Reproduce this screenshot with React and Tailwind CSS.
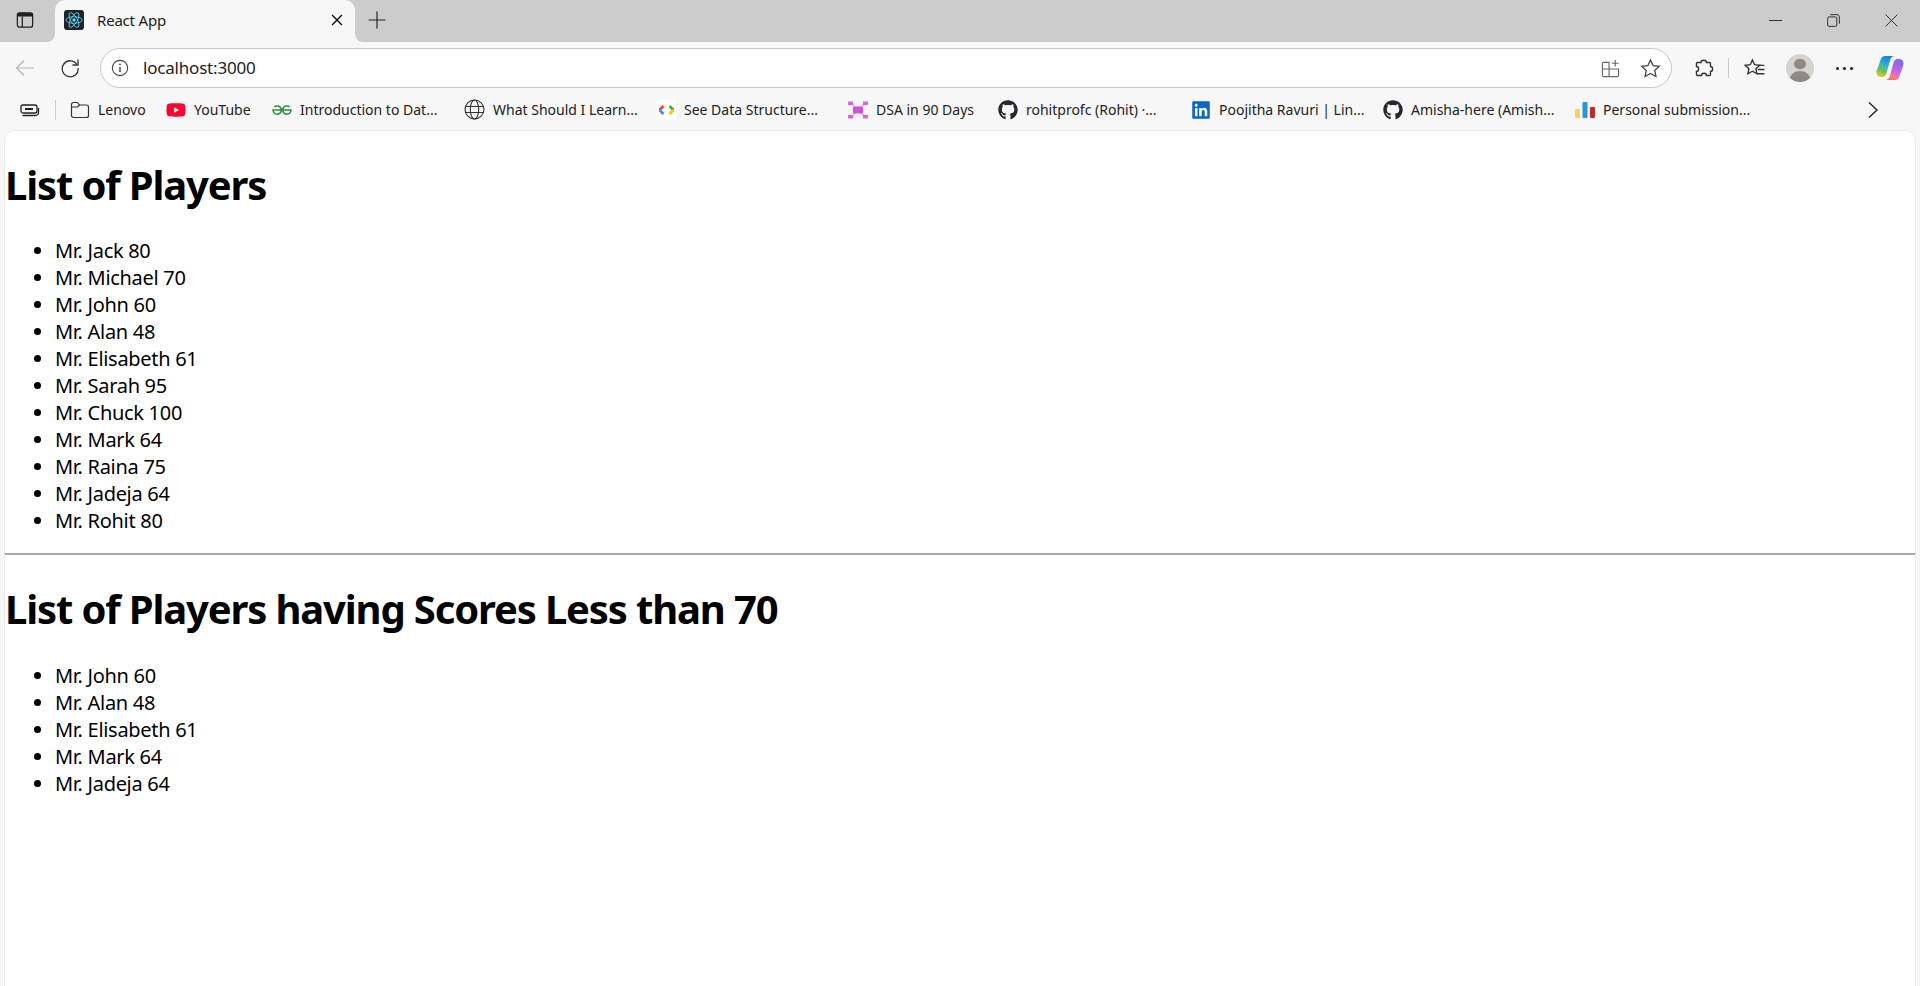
import { FaGithub, FaYoutube, FaLinkedin } from "react-icons/fa";

const chromeFont = "[font-family:'Noto_Sans',sans-serif]";

const players = [
  ["Jack", 80], ["Michael", 70], ["John", 60], ["Alan", 48], ["Elisabeth", 61], ["Sarah", 95],
  ["Chuck", 100], ["Mark", 64], ["Raina", 75], ["Jadeja", 64], ["Rohit", 80],
];

// Small stroke icon wrapper
const Icon = ({ size = 20, className = "", children }) => (
  <svg width={size} height={size} viewBox="0 0 20 20" fill="none" stroke="currentColor" strokeWidth="1.2" className={`shrink-0 ${className}`}>
    {children}
  </svg>
);

const ReactLogo = () => (
  <div className="w-5 h-5 rounded-[3px] bg-[#20232a] flex items-center justify-center shrink-0">
    <svg width="18" height="18" viewBox="-11 -11 22 22" fill="none" stroke="#61dafb" strokeWidth="1">
      <circle r="2" fill="#61dafb" stroke="none" />
      <ellipse rx="10" ry="4" />
      <ellipse rx="10" ry="4" transform="rotate(60)" />
      <ellipse rx="10" ry="4" transform="rotate(120)" />
    </svg>
  </div>
);

const Copilot = () => (
  <svg width="28" height="28" viewBox="0 0 28 28" className="shrink-0">
    <defs>
      <linearGradient id="cpa" x1="0.6" y1="0" x2="0.2" y2="1">
        <stop offset="0" stopColor="#1b7fe8" />
        <stop offset="0.45" stopColor="#2cb8c8" />
        <stop offset="0.7" stopColor="#6cc24a" />
        <stop offset="1" stopColor="#f6c52d" />
      </linearGradient>
      <linearGradient id="cpb" x1="0.6" y1="0" x2="0.4" y2="1">
        <stop offset="0" stopColor="#7b6cf0" />
        <stop offset="0.5" stopColor="#c263e0" />
        <stop offset="0.85" stopColor="#f47a9a" />
        <stop offset="1" stopColor="#f5763a" />
      </linearGradient>
    </defs>
    <path d="M9 2h10c-2.500 0-4 1.500-4.800 4L10.500 19c-.8 2.500-2 4-4.500 4H5C2 23 .5 21 .5 18.500c0-1 .3-2 .6-3L4.500 6C5.300 3.500 6.800 2 9 2z" fill="url(#cpa)" />
    <path d="M19 26H9c2.500 0 4-1.500 4.800-4L17.500 9c.8-2.500 2-4 4.500-4h1c3 0 4.500 2 4.500 4.500 0 1-.3 2-.6 3L23.500 22c-.8 2.500-2.300 4-4.500 4z" fill="url(#cpb)" />
  </svg>
);

const Folder = () => (
  <Icon className="text-[#333]">
    <path d="M1.500 4.500a2 2 0 0 1 2-2h4l2 2.500h7a2 2 0 0 1 2 2v8.500a2 2 0 0 1-2 2h-13a2 2 0 0 1-2-2z" />
    <path d="M1.500 7h6l2-2" />
  </Icon>
);

const Globe = () => (
  <svg width="21" height="21" viewBox="0 0 21 21" fill="none" stroke="#333" strokeWidth="1.100" className="shrink-0">
    <circle cx="10.500" cy="10.500" r="9.500" />
    <ellipse cx="10.500" cy="10.500" rx="4.200" ry="9.500" />
    <path d="M1.500 7.500h18M1.500 13.500h18" />
  </svg>
);

const Gfg = () => (
  <svg width="20" height="20" viewBox="0 0 20 20" fill="none" stroke="#2f8d46" strokeWidth="1.500" className="shrink-0">
    <path d="M2.500 7C3.500 5.500 8.500 5 9.500 10H1C1.500 15.500 8.500 15.500 9.500 10" />
    <path d="M17.500 7C16.500 5.500 11.500 5 10.500 10H19C18.500 15.500 11.500 15.500 10.500 10" />
  </svg>
);

const CodeMark = () => (
  <div className="w-5 h-5 bg-white flex items-center justify-center shrink-0">
    <svg width="17" height="10" viewBox="0 0 17 10" fill="none" strokeWidth="2.500">
      <path d="M5.500 1 1.500 5" stroke="#ea4335" />
      <path d="M1.500 5l4 4" stroke="#4285f4" />
      <path d="M11.500 1l4 4" stroke="#34a853" />
      <path d="M15.500 5l-4 4" stroke="#fbbc05" />
    </svg>
  </div>
);

const DsaMark = () => (
  <svg width="20" height="20" viewBox="0 0 20 20" className="shrink-0" fill="#d34fdc">
    <path d="M3 3l14 14M17 3 3 17" stroke="#d34fdc" strokeWidth="1.500" opacity="0.5" />
    <rect x="5" y="6.500" width="10" height="7" rx="1.500" />
    <rect x="0" y="1.500" width="5" height="3.500" opacity="0.85" />
    <rect x="15" y="1.500" width="5" height="3.500" opacity="0.85" />
    <rect x="0" y="15" width="5" height="3.500" opacity="0.85" />
    <rect x="15" y="15" width="5" height="3.500" opacity="0.85" />
  </svg>
);

const BarsMark = () => (
  <svg width="20" height="20" viewBox="0 0 20 20" className="shrink-0">
    <rect x="0" y="9" width="5" height="9" rx="1" fill="#fbcf5b" />
    <rect x="7.500" y="2" width="5" height="16" rx="1" fill="#2b93d8" />
    <rect x="15" y="7" width="5" height="11" rx="1" fill="#c4262e" />
  </svg>
);

const bookmarks = [
  { label: "Lenovo", width: "w-[96px]", icon: <Folder /> },
  { label: "YouTube", width: "w-[106px]", icon: <FaYoutube size={20} className="text-[#ff0033] shrink-0" /> },
  { label: "Introduction to Dat...", width: "w-[192px]", icon: <Gfg /> },
  { label: "What Should I Learn...", width: "w-[192px]", icon: <Globe /> },
  { label: "See Data Structure...", width: "w-[192px]", icon: <CodeMark /> },
  { label: "DSA in 90 Days", width: "w-[150px]", icon: <DsaMark /> },
  { label: "rohitprofc (Rohit) ·...", width: "w-[193px]", icon: <FaGithub size={20} className="text-[#24292f] shrink-0" /> },
  { label: "Poojitha Ravuri | Lin...", width: "w-[192px]", icon: <FaLinkedin size={20} className="text-[#0a66c2] shrink-0" /> },
  { label: "Amisha-here (Amish...", width: "w-[192px]", icon: <FaGithub size={20} className="text-[#24292f] shrink-0" /> },
  { label: "Personal submission...", width: "w-[280px]", icon: <BarsMark /> },
];

const PlayerList = ({ items }) => (
  <ul className="list-disc pl-[50px]">
    {items.map(([name, score]) => (
      <li key={name} className="leading-[27px] tracking-[-0.3px]">Mr. {name} {score}</li>
    ))}
  </ul>
);

export default function App() {
  return (
    <div className={`h-[986px] overflow-hidden bg-[#f7f7f7] text-[#1b1b1b] ${chromeFont}`}>
      {/* tab strip */}
      <div className="h-[42px] bg-[#cccccc] flex items-stretch">
        <div className="w-[55px] flex items-center pl-[16px] pb-[2px]">
          <Icon size={18} className="text-[#222]">
            <rect x="1.500" y="2" width="17" height="16" rx="2.500" strokeWidth="1.400" />
            <path d="M2 3.500a1.500 1.500 0 0 1 1.500-1.500h13a1.500 1.500 0 0 1 1.500 1.500V6H2z" fill="currentColor" stroke="none" />
            <path d="M7 6v12" strokeWidth="1.400" />
          </Icon>
        </div>
        <div className="relative w-[300px] bg-[#f7f7f7] rounded-t-[10px] flex items-center pl-[9px] pr-[11px] pb-[2px]">
          <span className="absolute -left-2 bottom-0 w-2 h-2 bg-[#f7f7f7]"><span className="block w-2 h-2 bg-[#cccccc] rounded-br-[8px]" /></span>
          <span className="absolute -right-2 bottom-0 w-2 h-2 bg-[#f7f7f7]"><span className="block w-2 h-2 bg-[#cccccc] rounded-bl-[8px]" /></span>
          <ReactLogo />
          <span className="ml-[13px] text-[15px] grow tracking-[-0.2px]">React App</span>
          <Icon size={14} className="text-[#111]"><path d="M3 3l14 14M17 3 3 17" strokeWidth="2" /></Icon>
        </div>
        <div className="ml-[12px] flex items-center pb-[2px]">
          <Icon size={20} className="text-[#222]"><path d="M10 1.500v17M1.500 10h17" /></Icon>
        </div>
        <div className="ml-auto flex items-center pr-[22px] gap-[45px] text-[#222] pb-[1px]">
          <Icon size={13}><path d="M0 10h20" strokeWidth="1.400" /></Icon>
          <Icon size={13}>
            <rect x="1" y="4.500" width="14" height="14.500" rx="2" strokeWidth="1.400" />
            <path d="M5 1h10.500a3.500 3.500 0 0 1 3.500 3.500V15" strokeWidth="1.400" />
          </Icon>
          <Icon size={13}><path d="M1 1l18 18M19 1 1 19" strokeWidth="1.400" /></Icon>
        </div>
      </div>

      {/* address bar row */}
      <div className="h-[50px] pt-[2px] flex items-center pl-[15px] pr-[13px]">
        <Icon size={20} className="text-[#b5b5b5]"><path d="M19 10H1.500M9 2.500 1.500 10 9 17.500" /></Icon>
        <Icon size={20} className="ml-[25px] text-[#333]">
          <path d="M17 6.500A8 8 0 1 0 18.200 10" strokeWidth="1.300" />
          <path d="M18 1.500v5.500h-5.500" strokeWidth="1.300" />
        </Icon>
        <div className="ml-[20px] w-[1572px] h-[40px] bg-white rounded-full border border-[#c9c9c9] flex items-center pl-[10px] pr-[10px]">
          <Icon size={18} className="text-[#444]">
            <circle cx="10" cy="10" r="8.500" />
            <path d="M10 9v5.500" strokeWidth="1.600" />
            <circle cx="10" cy="6" r="1" fill="currentColor" stroke="none" />
          </Icon>
          <span className="ml-[14px] text-[17px] text-[#222] grow tracking-[-0.2px]">localhost:3000</span>
          <Icon size={19} className="text-[#666]">
            <path d="M8.500 3.500H3a1.500 1.500 0 0 0-1.500 1.500V17A1.500 1.500 0 0 0 3 18.500h14a1.500 1.500 0 0 0 1.500-1.500V10.500H8.500zM1.500 10.500h7M8.500 10.500v8M11.500 4.500h7M15 1v7" />
          </Icon>
          <Icon size={21} className="ml-[20px] text-[#444]">
            <path d="M10 1.800l2.500 5.400 5.900.7-4.400 4 1.200 5.800-5.200-2.900-5.200 2.900 1.200-5.800-4.400-4 5.900-.7z" />
          </Icon>
        </div>
        <Icon size={20} className="ml-[22px] text-[#333]">
          <path d="M7 4.500C7 1.500 12.500 1.500 12.500 4.500H15.500a1 1 0 0 1 1 1V8.500c2.800 0 2.800 5 0 5V16.500a1 1 0 0 1-1 1H12.500c0-3-5-3-5 0H3.500a1 1 0 0 1-1-1V13.500c2.800 0 2.800-5 0-5V5.500a1 1 0 0 1 1-1z" strokeWidth="1.400" />
        </Icon>
        <div className="ml-[14px] w-px h-5 bg-[#c8c8c8]" />
        <Icon size={21} className="ml-[15px] text-[#333]">
          <path d="M8 1.800l2 4.600 5 .5-3.700 3.300 1 4.800L8 12.600 3.700 15l1-4.800L1 6.900l5-.5z" strokeWidth="1.300" />
          <path d="M14 7h5.500M13 11h6.500M12.500 15h7" strokeWidth="1.300" />
        </Icon>
        <div className="ml-[21px] w-7 h-7 rounded-full bg-[#d6d3cf] overflow-hidden flex flex-col items-center shrink-0">
          <div className="mt-[5px] w-[12px] h-[12px] rounded-full bg-[#8c8985]" />
          <div className="mt-[2px] w-[22px] h-[14px] rounded-t-full bg-[#8c8985]" />
        </div>
        <div className="ml-[22px] flex gap-[4px]">
          <div className="w-[3px] h-[3px] rounded-full bg-[#222]" />
          <div className="w-[3px] h-[3px] rounded-full bg-[#222]" />
          <div className="w-[3px] h-[3px] rounded-full bg-[#222]" />
        </div>
        <div className="ml-[23px]"><Copilot /></div>
      </div>

      {/* bookmarks row */}
      <div className="h-[38px] pb-[3px] flex items-center pl-[20px] text-[14px] text-[#222]">
        <svg width="20" height="20" viewBox="0 0 20 20" fill="none" stroke="#222" strokeWidth="1.300" className="shrink-0">
          <rect x="1" y="5" width="16" height="8" rx="2" />
          <path d="M5 9h8" strokeWidth="2" />
          <path d="M2.500 15.500h13a3 3 0 0 0 3-3V8" />
        </svg>
        <div className="ml-[15px] mr-[14px] w-px h-5 bg-[#d0d0d0]" />
        {bookmarks.map((b) => (
          <div key={b.label} className={`${b.width} flex items-center gap-2 shrink-0 whitespace-nowrap`}>
            {b.icon}
            <span>{b.label}</span>
          </div>
        ))}
        <svg width="12" height="18" viewBox="0 0 12 18" fill="none" stroke="#222" strokeWidth="1.400" className="ml-[12px] shrink-0">
          <path d="M2 1.500 10 9l-8 7.500" />
        </svg>
      </div>

      {/* page content */}
      <main className="mx-[4px] h-[856px] bg-white rounded-t-[10px] border-t border-x border-[#ebebeb] text-black text-[20px] pt-[27px] [font-family:'Noto_Sans',sans-serif]">
        <h1 className="text-[40px] font-bold leading-[53px] tracking-[-1.150px] mb-[26px]">List of Players</h1>
        <PlayerList items={players} />
        <hr className="mt-[19px] mb-[27px] border-t-2 border-[#a8a8a8]" />
        <h1 className="text-[40px] font-bold leading-[53px] tracking-[-1.150px] mb-[27px]">List of Players having Scores Less than 70</h1>
        <PlayerList items={players.filter(([, s]) => s < 70)} />
      </main>
    </div>
  );
}
